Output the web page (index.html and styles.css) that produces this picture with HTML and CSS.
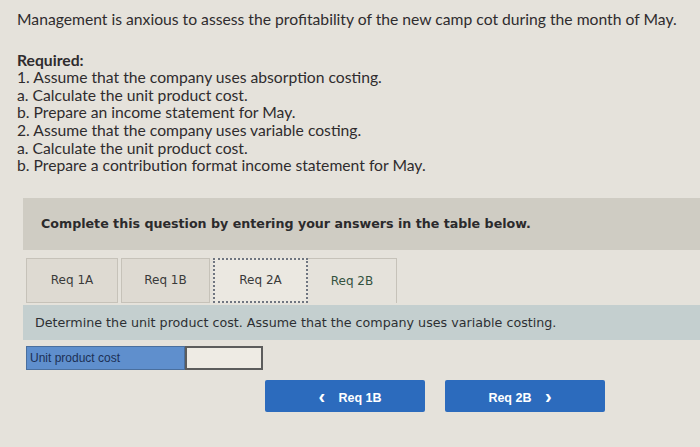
FILE: index.html
```html
<!DOCTYPE html>
<html lang="en">
<head>
  <meta charset="UTF-8" />
  <title>Variable costing</title>
  <link rel="stylesheet" href="styles.css">
</head>
<body>
  <div class="intro">
    <p>Management is anxious to assess the profitability of the new camp cot during the month of May.</p>
    <p class="req"><strong>Required:</strong><br>
      1. Assume that the company uses absorption costing.<br>
      a. Calculate the unit product cost.<br>
      b. Prepare an income statement for May.<br>
      2. Assume that the company uses variable costing.<br>
      a. Calculate the unit product cost.<br>
      b. Prepare a contribution format income statement for May.</p>
  </div>

  <div class="question">
    <div class="banner">Complete this question by entering your answers in the table below.</div>

    <div class="tabs">
      <div class="tab">Req 1A</div>
      <div class="tab">Req 1B</div>
      <div class="tab active">Req 2A</div>
      <div class="tab open">Req 2B</div>
    </div>

    <div class="prompt">Determine the unit product cost. Assume that the company uses variable costing.</div>

    <div class="answer">
      <label for="unitCost">Unit product cost</label>
      <input type="text" id="unitCost">
    </div>

    <div class="nav">
      <button class="prev"><span class="chev">&lsaquo;</span> Req 1B</button>
      <button class="next">Req 2B <span class="chev">&rsaquo;</span></button>
    </div>
  </div>
</body>
</html>
```

FILE: styles.css
```css
body {
  background: #e5e2db;
  margin: 0;
  padding: 11px 0 0 0;
  color: #2f2c2e;
}
.intro {
  padding-left: 17px;
  font-family: Lato, 'Open Sans', sans-serif;
  font-size: 15.7px;
  line-height: 17.6px;
}
.intro p {
  margin: 0;
}
.intro .req {
  margin-top: 23px;
}
.intro strong {
  font-weight: bold;
}
.question {
  padding-left: 23px;
  margin-top: 23px;
  font-family: 'DejaVu Sans', Verdana, sans-serif;
}
.banner {
  background: #cfccc3;
  height: 52px;
  padding-left: 18px;
  display: flex;
  align-items: center;
  font-size: 12.65px;
  font-weight: bold;
  color: #2b2a2c;
}
.tabs {
  display: flex;
  gap: 3px;
  margin: 8px 0 0 3px;
  height: 45px;
}
.tab {
  width: 92px;
  box-sizing: border-box;
  border: 1px solid #c6c2b9;
  background: #dedad2;
  display: flex;
  align-items: center;
  justify-content: center;
  font-size: 12px;
  color: #3a3a3a;
}
.tab:nth-child(2) {
  width: 89px;
}
.tab.active {
  width: 95px;
  background: #ebe8e1;
  border: 2px dotted #6f7580;
}
.tab.open {
  width: 89px;
  margin-left: -3px;
  background: transparent;
  border-left: none;
  border-bottom: none;
  color: #34523f;
}
.prompt {
  background: #c4cfcf;
  height: 35px;
  margin-top: 2px;
  padding-left: 12px;
  display: flex;
  align-items: center;
  font-size: 12.7px;
  color: #2d2f33;
}
.answer {
  display: flex;
  margin: 6px 0 0 3px;
  height: 24px;
  font-family: 'Liberation Sans', Arial, sans-serif;
}
.answer label {
  width: 159px;
  box-sizing: border-box;
  background: #5f8fcd;
  border: 1px solid #4a6f9e;
  padding: 4px 3px;
  font-size: 12px;
  color: #1c2f55;
}
.answer input {
  width: 78px;
  box-sizing: border-box;
  margin: 0;
  border: 2px solid #5c5c5c;
  background: #eeebe4;
}
.nav {
  display: flex;
  gap: 20px;
  margin: 10px 0 0 242px;
}
.nav button {
  width: 160px;
  height: 32px;
  background: #2c6bbd;
  color: #fff;
  border: none;
  border-radius: 2px;
  font-family: 'Liberation Sans', Arial, sans-serif;
  font-size: 12.5px;
  font-weight: bold;
  cursor: pointer;
}
.nav .chev {
  font-size: 20px;
  font-weight: bold;
  margin: 0 10px;
  position: relative;
  top: 1px;
}
```
